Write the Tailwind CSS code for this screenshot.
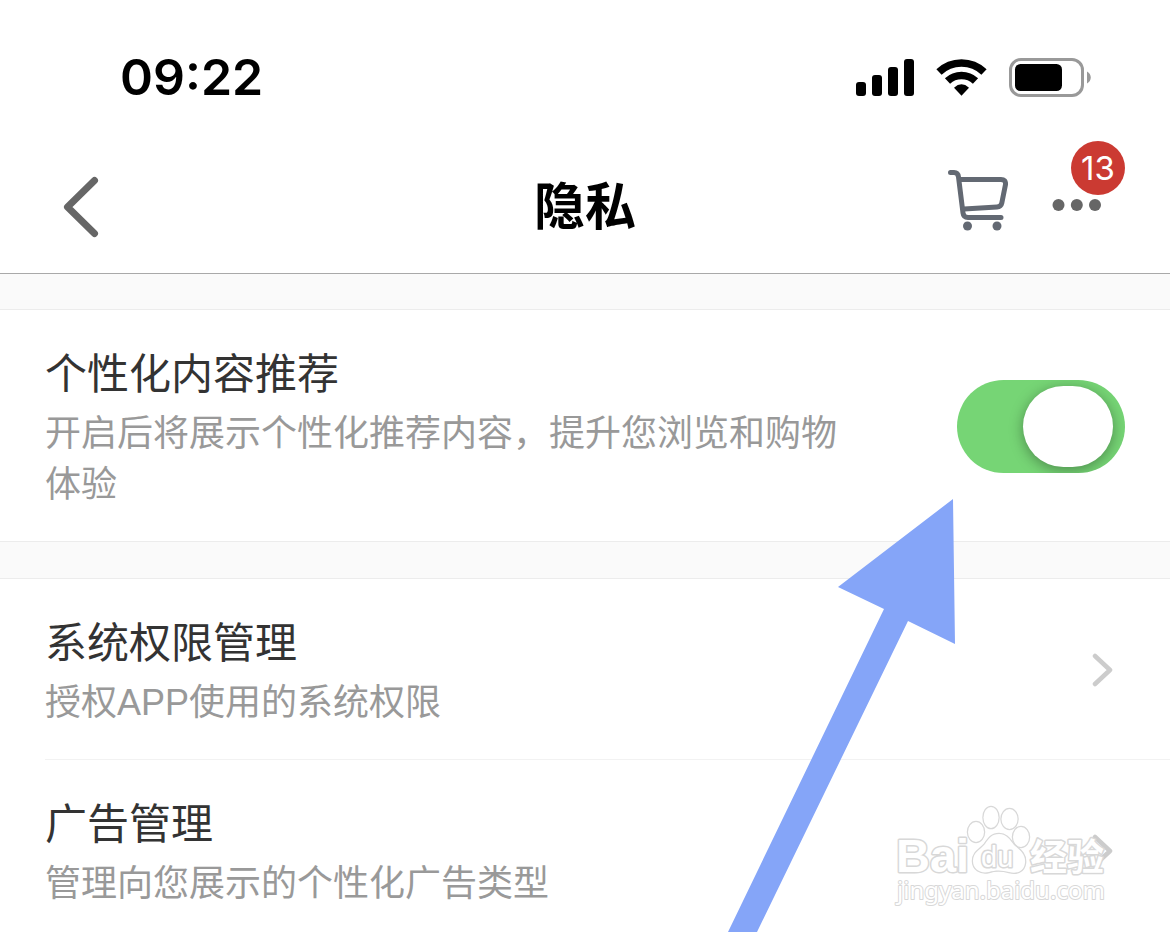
<!DOCTYPE html>
<html lang="zh-CN">
<head>
    <meta charset="UTF-8">
    <meta name="viewport" content="width=device-width, initial-scale=1.0">
    <title>隐私</title>
    <script src="https://cdn.jsdelivr.net/npm/@tailwindcss/browser@4"></script>
</head>
<body class="bg-white font-['Liberation_Sans','Noto_Sans_CJK_SC',sans-serif]">
    <div class="relative min-h-screen overflow-hidden">
        <!-- Status bar -->
        <div class="flex h-[140px] items-center justify-between pt-[14px] pr-[79px] pl-[120px]">
            <span class="font-['Inter',sans-serif] text-[50px] leading-[60px] font-semibold">09:22</span>
            <div class="flex items-center gap-[22px]">
                <svg class="h-[38px] w-[58px]" viewBox="0 0 58 38">
                    <rect x="0" y="24" width="10" height="14" rx="3"/>
                    <rect x="16" y="17" width="10" height="21" rx="3"/>
                    <rect x="32" y="9" width="10" height="29" rx="3"/>
                    <rect x="48" y="1" width="10" height="37" rx="3"/>
                </svg>
                <svg class="h-[38px] w-[51px]" viewBox="0 0 51 38">
                    <g fill="none" stroke="#000" stroke-width="7.6">
                        <path d="M3 14A32.600 32.600 0 0 1 48 14"/>
                        <path d="M11.500 23A20.600 20.600 0 0 1 39.500 23"/>
                    </g>
                    <path d="M18 29.700Q25.500 23 33 29.700L25.500 37.700Z"/>
                </svg>
                <svg class="h-[39px] w-[82px]" viewBox="0 0 82 39">
                    <rect x="1.500" y="1.500" width="72" height="36" rx="10.500" fill="none" stroke="#999" stroke-width="3"/>
                    <rect x="6" y="6" width="47" height="27" rx="5.500"/>
                    <path d="M78 13.500C83 16 83 23 78 25.500Z" fill="#999"/>
                </svg>
            </div>
        </div>

        <!-- Nav bar -->
        <header class="grid h-[134px] grid-cols-[1fr_auto_1fr] items-center border-b border-[#a9a9a9] px-[45px]">
            <button type="button" aria-label="返回" class="justify-self-start pl-[15px]">
                <svg class="h-[62px] w-10" viewBox="0 0 40 62" fill="none" stroke="#666" stroke-width="7" stroke-linecap="round" stroke-linejoin="round">
                    <path d="M34.500 4.500L7.500 31L34.500 57.500"/>
                </svg>
            </button>
            <h1 class="pt-0.5 text-[51px] leading-[60px] font-bold">隐私</h1>
            <div class="flex items-center justify-self-end gap-11">
                <button type="button" aria-label="购物车">
                    <svg class="h-[74px] w-[60px]" viewBox="0 7 60 74" fill="none" stroke="#636973" stroke-width="5" stroke-linecap="round" stroke-linejoin="round">
                        <path d="M2.500 9.500H6Q10 9.500 10.500 14L15 50Q15.500 54.500 20 54.500H53"/>
                        <path d="M11.500 16.500H53Q58 16.500 57.500 21.500L53.800 40Q53 43.800 49 44L16 46"/>
                        <g fill="#636973" stroke="none">
                            <circle cx="19.500" cy="63" r="4.500"/>
                            <circle cx="49" cy="63" r="4.500"/>
                        </g>
                    </svg>
                </button>
                <button type="button" aria-label="更多" class="relative h-16 w-[73px]">
                    <svg class="h-16 w-[50px]" viewBox="0 0 50 64" fill="#666">
                        <circle cx="6.500" cy="30" r="6"/>
                        <circle cx="24.800" cy="30" r="6"/>
                        <circle cx="43" cy="30" r="6"/>
                    </svg>
                    <span class="absolute -top-[34px] right-0 size-[54px] rounded-full bg-[#cb3a32] text-center font-['Inter',sans-serif] text-[33px] leading-[54px] text-white">13</span>
                </button>
            </div>
        </header>

        <!-- Settings -->
        <main>
            <div class="h-9 border-b border-[#ececec] bg-[#fafafa]"></div>
            <section class="flex items-center gap-[100px] px-[45px] pt-8 pb-[31px]">
                <div class="flex-1 pt-[3px]">
                    <label for="recommend" class="block text-[42px] leading-[60px] text-[#333]">个性化内容推荐</label>
                    <p class="mt-[3px] text-[36px] leading-[51px] text-[#999]">开启后将展示个性化推荐内容，提升您浏览和购物体验</p>
                </div>
                <input type="checkbox" id="recommend" role="switch" checked class="h-[93px] w-[168px] shrink-0 appearance-none overflow-hidden rounded-full bg-[#76d575] p-1.5 before:block before:h-[81px] before:w-[90px] before:rounded-[41px] before:bg-white before:shadow-[0_3px_14px_rgba(0,0,0,0.35)] checked:before:ml-[60px]">
            </section>
            <div class="h-[38px] border-y border-[#ececec] bg-[#fafafa]"></div>
            <ul>
                <li>
                    <a href="#" class="flex items-center justify-between pt-8 pr-[57px] pb-[31px] pl-[45px]">
                        <div class="pt-[3px]">
                            <h2 class="text-[42px] leading-[60px] text-[#333]">系统权限管理</h2>
                            <p class="mt-[3px] text-[36px] leading-[51px] text-[#999]">授权APP使用的系统权限</p>
                        </div>
                        <svg class="h-9 w-[22px]" viewBox="0 0 22 36" fill="none" stroke="#ccc" stroke-width="4.500" stroke-linecap="round" stroke-linejoin="round">
                            <path d="M4 4L19 18L4 32"/>
                        </svg>
                    </a>
                </li>
                <li class="ml-[45px] border-t border-[#f2f2f2]">
                    <a href="#" class="flex items-center justify-between pt-8 pr-[57px] pb-[31px]">
                        <div class="pt-[3px]">
                            <h2 class="text-[42px] leading-[60px] text-[#333]">广告管理</h2>
                            <p class="mt-[3px] text-[36px] leading-[51px] text-[#999]">管理向您展示的个性化广告类型</p>
                        </div>
                        <svg class="h-9 w-[22px]" viewBox="0 0 22 36" fill="none" stroke="#ccc" stroke-width="4.500" stroke-linecap="round" stroke-linejoin="round">
                            <path d="M4 4L19 18L4 32"/>
                        </svg>
                    </a>
                </li>
            </ul>
        </main>

        <!-- Arrow pointing at the switch -->
        <svg class="pointer-events-none absolute top-[499px] right-[215px] h-[433px] w-[227px]" viewBox="0 0 227 433" fill="#85a5f8">
            <path d="M225 0L227 145L180 122L29 433H0L156 110L110 88Z"/>
        </svg>

        <!-- Watermark -->
        <svg class="pointer-events-none absolute top-[800px] right-[56px] h-[110px] w-[220px]" viewBox="0 0 220 110" fill="#fff" stroke="#d8d8d8" stroke-width="3" stroke-linejoin="round" paint-order="stroke">
            <text x="2" y="72" font-family="Liberation Sans, sans-serif" font-size="47" font-weight="bold">Bai</text>
            <g stroke-width="2.500">
                <ellipse cx="82" cy="32" rx="8" ry="10"/>
                <ellipse cx="97" cy="17.500" rx="7.500" ry="10.500"/>
                <ellipse cx="115.500" cy="19" rx="8" ry="10"/>
                <ellipse cx="127" cy="37" rx="8" ry="10"/>
                <path d="M105 34C113 34 116 40 120 45C126 50 132 54 131 63C130 72 122 74 115 72C108 70 101 70 95 72C86 74 79 69 79 61C79 52 86 50 91 44C95 38 98 34 105 34Z"/>
            </g>
            <text x="87" y="67" font-family="Liberation Sans, sans-serif" font-size="29">du</text>
            <text x="136" y="71" font-family="Noto Sans CJK SC, sans-serif" font-size="37" font-weight="bold">经验</text>
            <text x="3" y="99" font-family="Noto Sans, sans-serif" font-size="24" stroke-width="2">jingyan.baidu.com</text>
        </svg>
    </div>
</body>
</html>
